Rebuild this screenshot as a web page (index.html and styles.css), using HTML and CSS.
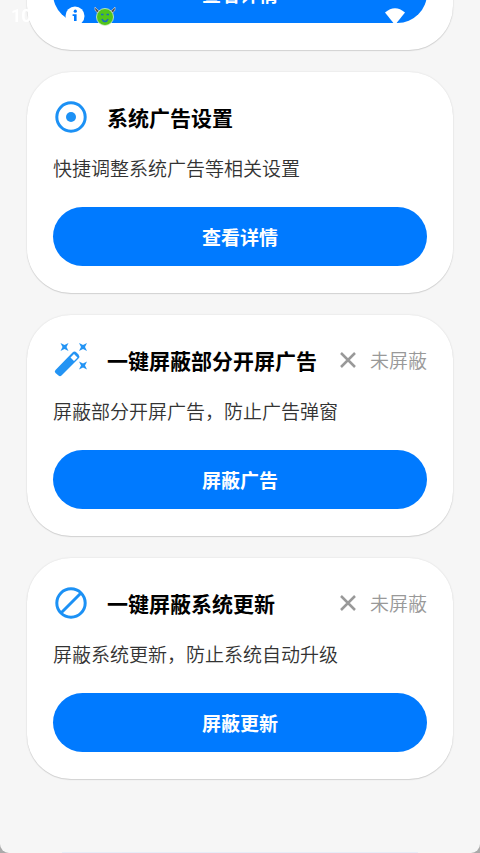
FILE: index.html
```html
<!DOCTYPE html>
<html lang="zh-CN">
<head>
<meta charset="utf-8">
<meta name="viewport" content="width=device-width, initial-scale=1">
<title>系统设置</title>
<link rel="stylesheet" href="styles.css">
</head>
<body>
<header class="status-bar">
  <span class="time">10</span>
  <svg class="info" viewBox="0 0 20 20" aria-hidden="true"><circle cx="10" cy="10" r="9.5" fill="#fff"/><path d="M7.600 8.200h4v6.800h-2.600v-5h-1.400z" fill="#007aff"/><circle cx="10.300" cy="5.200" r="1.600" fill="#007aff"/></svg>
  <svg class="imp" viewBox="0 0 22 20" aria-hidden="true"><path d="M5 7Q0 6 1 1l3 3 3 2M17 7q5-1 4-6l-3 3-3 2" fill="#555" stroke="#ddd" stroke-width=".6"/><circle cx="11" cy="11" r="8.5" fill="#52c41a" stroke="#d5f0d0" stroke-width=".8"/><path d="M7 8.500h2.500M12.500 8.500h2.500M8 13q1 2.500 3 2.500t3-2.500" fill="none" stroke="#1769c8" stroke-width="1.600"/></svg>
  <span class="spacer"></span>
  <svg class="wifi" viewBox="0 0 20 17" aria-hidden="true"><path d="M0 4.500Q10-4 20 4.500L10 17z" fill="#fff"/></svg>
  <svg class="signal" viewBox="0 0 18 17" aria-hidden="true"><path d="M0 17L18 0v17z" fill="#fff"/></svg>
</header>
<main class="feed">
  <section class="card">
    <div class="card-head"></div>
    <p class="desc"></p>
    <button class="action" type="button">查看详情</button>
  </section>
  <section class="card">
    <div class="card-head">
      <svg class="icon" viewBox="0 0 36 36" aria-hidden="true"><circle cx="18" cy="18" r="14.200" fill="none" stroke="#1c91f5" stroke-width="3"/><circle cx="18" cy="18" r="5" fill="#1c91f5"/></svg>
      <h2>系统广告设置</h2>
    </div>
    <p class="desc">快捷调整系统广告等相关设置</p>
    <button class="action" type="button">查看详情</button>
  </section>
  <section class="card">
    <div class="card-head">
      <svg class="icon" viewBox="0 0 36 36" aria-hidden="true"><path d="M2.500 28L19.500 10.500q2-1.800 4 0l2 2q1.700 2 0 4L8.500 33.500q-1.500 1.300-3 0l-3-2.500q-1.500-1.500 0-3zM17.500 15.500l3.500 3.500 3.500-3.500-3.500-3.500z" fill="#2394f4" fill-rule="evenodd"/><path id="spark" d="M7.500 1l4 2 4-2-2 4 2 4-4-2-4 2 2-4z" fill="#2394f4"/><use href="#spark" x="18.500"/><use href="#spark" x="18.500" y="18.500"/></svg>
      <h2>一键屏蔽部分开屏广告</h2>
      <span class="state"><svg class="cross" viewBox="0 0 16 16" aria-hidden="true"><path d="M1 1l14 14M15 1L1 15"/></svg>未屏蔽</span>
    </div>
    <p class="desc">屏蔽部分开屏广告，防止广告弹窗</p>
    <button class="action" type="button">屏蔽广告</button>
  </section>
  <section class="card">
    <div class="card-head">
      <svg class="icon" viewBox="0 0 36 36" aria-hidden="true"><g fill="none" stroke="#1c91f5" stroke-width="3"><circle cx="18" cy="18" r="14.200"/><path d="M8 28L28 8"/></g></svg>
      <h2>一键屏蔽系统更新</h2>
      <span class="state"><svg class="cross" viewBox="0 0 16 16" aria-hidden="true"><path d="M1 1l14 14M15 1L1 15"/></svg>未屏蔽</span>
    </div>
    <p class="desc">屏蔽系统更新，防止系统自动升级</p>
    <button class="action" type="button">屏蔽更新</button>
  </section>
</main>
</body>
</html>
```
FILE: styles.css
```css
* { box-sizing: border-box; }
body {
  margin: 0;
  background: #f6f6f6;
  font-family: "Noto Sans CJK SC", sans-serif;
}
/* rounded screen corners */
body::after {
  content: "";
  position: fixed;
  inset: 0;
  border-radius: 0 0 9px 9px;
  box-shadow: 0 0 0 9px #aaa;
  pointer-events: none;
}
.feed {
  display: flex;
  flex-direction: column;
  justify-content: flex-end;
  gap: 22px;
  height: 100vh;
  padding: 0 27px 74px;
  overflow: hidden;
}
/* top edge of the bottom bar */
.feed::after {
  content: "";
  position: absolute;
  bottom: 0;
  left: 62px;
  right: 62px;
  height: 1px;
  background: #e6edf8;
}
.card {
  flex: none;
  padding: 27px 26px;
  border-radius: 44px;
  background: #fff;
  box-shadow: 0 0 2px rgba(0, 0, 0, .12), 0 1px 1px rgba(0, 0, 0, .12);
}
.card-head {
  display: flex;
  align-items: center;
  height: 36px;
}
.icon {
  flex: none;
  width: 36px;
  height: 36px;
  margin-right: 18px;
}
h2 {
  margin: 0;
  font-size: 21px;
  line-height: 32px;
  font-weight: 700;
  color: #000;
  white-space: nowrap;
}
.state {
  display: flex;
  align-items: center;
  gap: 14px;
  margin-left: auto;
  font-size: 19px;
  line-height: 28px;
  font-weight: 350;
  color: #999;
  white-space: nowrap;
}
.cross {
  width: 16px;
  height: 16px;
  fill: none;
  stroke: #999;
  stroke-width: 2.500;
}
.desc {
  height: 28px;
  margin: 19px 0 25px;
  font-size: 19px;
  line-height: 28px;
  font-weight: 350;
  color: #333;
  white-space: nowrap;
}
.action {
  display: block;
  width: 100%;
  height: 59px;
  padding: 0;
  border: 0;
  border-radius: 30px;
  background: #007aff;
  font: 700 19px/28px "Noto Sans CJK SC", sans-serif;
  color: #fff;
}
.status-bar {
  position: absolute;
  inset: 0 0 auto;
  z-index: 1;
  display: flex;
  align-items: center;
  height: 32px;
  padding: 0 54px 0 11px;
}
.time {
  width: 54px;
  font: 700 18px/24px Roboto, sans-serif;
  color: #fff;
}
.info { width: 20px; height: 20px; }
.imp { width: 22px; height: 20px; margin-left: 9px; }
.spacer { flex: 1; }
.wifi { width: 20px; height: 17px; margin-right: 3px; }
.signal { width: 18px; height: 17px; }
```
